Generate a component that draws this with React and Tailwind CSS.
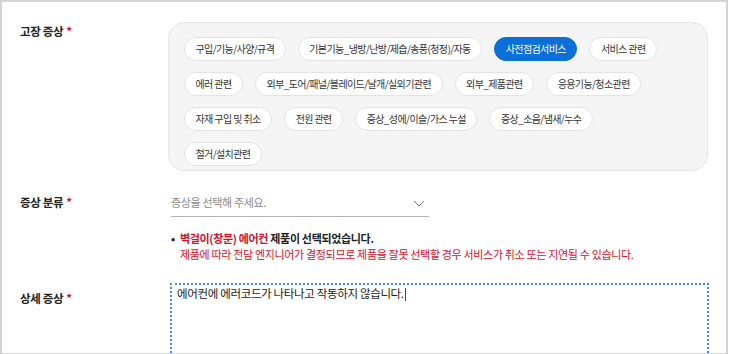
import React from 'react';

const FONT = { fontFamily: '"Noto Sans CJK KR", "Noto Sans", sans-serif' };

const rows = [
  ['구입/기능/사양/규격', '기본기능_냉방/난방/제습/송풍(청정)/자동', '사전점검서비스', '서비스 관련'],
  ['에러 관련', '외부_도어/패널/블레이드/날개/실외기관련', '외부_제품관련', '응용기능/청소관련'],
  ['자재 구입 및 취소', '전원 관련', '증상_성에/이슬/가스 누설', '증상_소음/냄새/누수'],
  ['철거/설치관련'],
];

function Label({ children }) {
  return (
    <div className="text-[11.5px] leading-[18px] font-bold tracking-[-0.03em] text-[#222]">
      {children}
      <span className="ml-[3px] text-[#d3112a]">*</span>
    </div>
  );
}

function Chip({ text, active }) {
  return (
    <button
      className={
        'h-[24px] px-[10.5px] rounded-full border text-[10px] leading-none tracking-[-0.06em] whitespace-nowrap ' +
        (active ? 'bg-[#0a6fd9] border-[#0a6fd9] text-white' : 'bg-white border-[#e3e3e3] text-[#333]')
      }
    >
      {text}
    </button>
  );
}

export default function App() {
  return (
    <div style={FONT} className="w-[731px] h-[354px] overflow-hidden bg-white">
      <div className="w-[728px] h-[354px] border-t-2 border-l-2 border-r-2 border-b border-[#d4d4d4] pl-[18px] pt-[20px]">
        {/* 고장 증상 */}
        <div className="flex">
          <div className="w-[148px]">
            <Label>고장 증상</Label>
          </div>
          <div className="w-[540px] bg-[#f5f5f5] border border-[#e6e6e6] rounded-[16px] pl-[15px] pt-[14px] pb-[4px] flex flex-col gap-y-[11px]">
            {rows.map((row, i) => (
              <div key={i} className="flex gap-x-[12px]">
                {row.map((t) => (
                  <Chip key={t} text={t} active={t === '사전점검서비스'} />
                ))}
              </div>
            ))}
          </div>
        </div>

        {/* 증상 분류 */}
        <div className="flex mt-[22px]">
          <div className="w-[151px]">
            <Label>증상 분류</Label>
          </div>
          <div>
            <div className="w-[258px] h-[24px] border-b border-[#b5b5b5] flex items-start justify-between">
              <span className="text-[11px] leading-[18px] tracking-[-0.03em] text-[#8a8a8a]">증상을 선택해 주세요.</span>
              <svg width="12" height="7" viewBox="0 0 12 7" className="mt-[7px] mr-[4px]">
                <path d="M1 1l5 5 5-5" fill="none" stroke="#777" strokeWidth="1" />
              </svg>
            </div>
            <div className="mt-[13px] text-[11px] leading-[16px] tracking-[-0.03em]">
              <div className="flex">
                <span className="w-[9px] font-bold text-[#222]">•</span>
                <span className="font-bold">
                  <span className="text-[#d3112a]">벽걸이(창문) 에어컨</span>
                  <span className="text-[#222]"> 제품이 선택되었습니다.</span>
                </span>
              </div>
              <div className="pl-[9px] text-[#d3112a] whitespace-nowrap">
                제품에 따라 전담 엔지니어가 결정되므로 제품을 잘못 선택할 경우 서비스가 취소 또는 지연될 수 있습니다.
              </div>
            </div>
          </div>
        </div>

        {/* 상세 증상 */}
        <div className="flex mt-[21px]">
          <div className="w-[150px] pt-[6px]">
            <Label>상세 증상</Label>
          </div>
          <div className="w-[539px] h-[110px] border-2 border-dotted border-[#3d8be0] pl-[5px] pt-0 text-[11.5px] leading-[16px]">
            <span className="tracking-[-0.03em] text-[#222]">
              에어컨에 에러코드가 나타나고 작동하지 않습니다.
            </span>
            <span className="inline-block w-px h-[13px] bg-[#444] align-middle ml-px" />
          </div>
        </div>
      </div>
    </div>
  );
}
